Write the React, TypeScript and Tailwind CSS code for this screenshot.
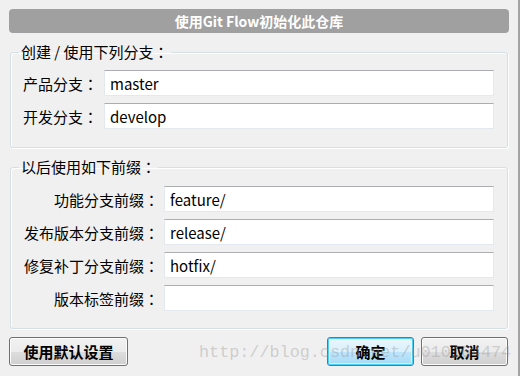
import React from 'react';

const cjk = "font-['Noto_Sans_CJK_SC',sans-serif]";

// full-width colon drawn with the JP face so it sits centred like the original UI font
const Label: React.FC<{ text: string }> = ({ text }) => (
  <>
    {text.slice(0, -1)}
    <span className="font-['Noto_Sans_CJK_JP',sans-serif]">{text.slice(-1)}</span>
  </>
);

const TextBox: React.FC<{ value?: string }> = ({ value = '' }) => (
  <div className="h-[26px] flex-1 flex items-center bg-white border border-[#e3e9ef] border-t-[#abadb3] pl-[5px] text-[15px] leading-none text-black">
    {value}
  </div>
);

const Button: React.FC<{ label: string; width: string; focused?: boolean }> = ({ label, width, focused }) => (
  <div
    className={`${width} h-[29px] rounded-[3px] border flex items-center justify-center text-[15px] font-bold leading-none text-black ${
      focused
        ? 'border-[#3c7fb1] bg-[linear-gradient(#eaf6fd_0%,#d9f0fc_50%,#bee6fd_51%,#a7d9f5_100%)] shadow-[inset_0_0_0_1px_#48d2f8,inset_0_0_0_2px_rgba(255,255,255,0.5)]'
        : 'border-[#707070] bg-[linear-gradient(#f2f2f2_0%,#ebebeb_50%,#dddddd_51%,#cfcfcf_100%)] shadow-[inset_0_0_0_1px_#fcfcfc]'
    }`}
  >
    {label}
  </div>
);

export default function App() {
  const prefixes = [
    { label: '功能分支前缀：', value: 'feature/' },
    { label: '发布版本分支前缀：', value: 'release/' },
    { label: '修复补丁分支前缀：', value: 'hotfix/' },
    { label: '版本标签前缀：', value: '' },
  ];

  return (
    <div className={`relative w-[520px] h-[376px] overflow-hidden bg-[#f0f0f0] border-r-2 border-[#a3a3a3] ${cjk}`}>
      <div className="flex flex-col pt-[9px] pl-[9px] pr-[9px]">
        {/* title bar */}
        <div className="h-[24px] w-[500px] rounded-[4px] bg-[#a0a0a0] flex items-center justify-center text-white text-[14px] font-bold leading-none">
          使用Git Flow初始化此仓库
        </div>

        {/* branches */}
        <fieldset className="mt-[9px] ml-[1px] w-[498px] rounded-[3px] border border-[#d5dfe5] shadow-[inset_1px_1px_0_#fff,1px_1px_0_#fff] pl-[8px] pr-[13px] pb-[18px]">
          <legend className="px-[2px] text-[15px] leading-[20px] text-black">
            <Label text="创建 / 使用下列分支：" />
          </legend>
          <div className="mt-[8px] flex flex-col gap-[7px] pl-[4px]">
            <div className="flex items-center">
              <div className="w-[81px] text-[15px] leading-none text-black">
                <Label text="产品分支：" />
              </div>
              <TextBox value="master" />
            </div>
            <div className="flex items-center">
              <div className="w-[81px] text-[15px] leading-none text-black">
                <Label text="开发分支：" />
              </div>
              <TextBox value="develop" />
            </div>
          </div>
        </fieldset>

        {/* prefixes */}
        <fieldset className="mt-[9px] ml-[1px] w-[498px] rounded-[3px] border border-[#d5dfe5] shadow-[inset_1px_1px_0_#fff,1px_1px_0_#fff] pl-[8px] pr-[13px] pb-[17px]">
          <legend className="px-[2px] text-[15px] leading-[20px] text-black">
            <Label text="以后使用如下前缀：" />
          </legend>
          <div className="mt-[9px] flex flex-col gap-[7px] pl-[4px]">
            {prefixes.map((p) => (
              <div key={p.label} className="flex items-center">
                <div className="w-[141px] pr-[5px] text-right text-[15px] leading-none text-black whitespace-nowrap">
                  <Label text={p.label} />
                </div>
                <TextBox value={p.value} />
              </div>
            ))}
          </div>
        </fieldset>

        {/* buttons */}
        <div className="mt-[8px] flex items-center">
          <Button label="使用默认设置" width="w-[119px]" />
          <div className="flex-1" />
          <div className="flex gap-[7px] mr-[1px]">
            <Button label="确定" width="w-[87px]" focused />
            <Button label="取消" width="w-[87px]" />
          </div>
        </div>
      </div>

      {/* watermark */}
      <div className="pointer-events-none absolute left-[199px] top-[341px] font-['Liberation_Mono',monospace] text-[16.8px] leading-[24px] text-[rgba(150,150,150,0.4)] whitespace-nowrap">
        http://blog.csdn.net/u010164474
      </div>
    </div>
  );
}
